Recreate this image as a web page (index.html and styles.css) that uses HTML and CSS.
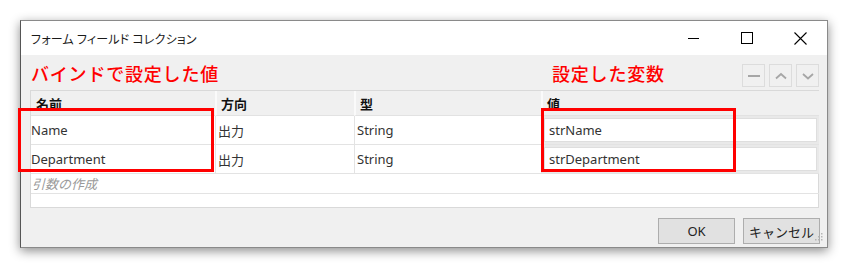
FILE: index.html
```html
<!DOCTYPE html>
<html lang="ja">
<head>
<meta charset="utf-8">
<link rel="stylesheet" href="styles.css">
</head>
<body>
<div class="stage">
  <div class="window">
    <div class="titlebar">
      <span class="title">フォーム フィールド コレクション</span>
      <div class="controls">
        <svg class="ctl ctl-min" width="12" height="12" viewBox="0 0 12 12"><path d="M0 6.5H11" stroke="#000" stroke-width="1"/></svg>
        <svg class="ctl ctl-max" width="13" height="13" viewBox="0 0 13 13"><rect x="0.5" y="0.5" width="11" height="11" fill="none" stroke="#000" stroke-width="1"/></svg>
        <svg class="ctl ctl-close" width="13" height="13" viewBox="0 0 13 13"><path d="M0.5 0.5L12.5 12.5M12.5 0.5L0.5 12.5" stroke="#000" stroke-width="1.1"/></svg>
      </div>
    </div>
    <div class="client">
      <div class="toprow">
        <span class="note">バインドで設定した値</span>
        <span></span>
        <span></span>
        <div class="col4">
          <span class="note">設定した変数</span>
          <div class="tools">
            <span class="tool"><svg width="14" height="10" viewBox="0 0 14 10"><path d="M1 5H13" stroke="#a6a6a6" stroke-width="2"/></svg></span>
            <span class="tool"><svg width="14" height="10" viewBox="0 0 14 10"><path d="M2 7.5L7 3L12 7.5" fill="none" stroke="#a6a6a6" stroke-width="1.8"/></svg></span>
            <span class="tool"><svg width="14" height="10" viewBox="0 0 14 10"><path d="M2 3L7 7.5L12 3" fill="none" stroke="#a6a6a6" stroke-width="1.8"/></svg></span>
          </div>
        </div>
      </div>
      <div class="grid">
        <div class="hcell">名前</div>
        <div class="hcell">方向</div>
        <div class="hcell">型</div>
        <div class="hcell">値</div>

        <div class="cell">Name</div>
        <div class="cell">出力</div>
        <div class="cell">String</div>
        <div class="cell vcell"><span class="input">strName</span></div>

        <div class="cell">Department</div>
        <div class="cell">出力</div>
        <div class="cell">String</div>
        <div class="cell vcell"><span class="input">strDepartment</span></div>

        <div class="wide create">引数の作成</div>
        <div class="wide blank"></div>
      </div>
      <div class="footer">
        <button class="btn">OK</button>
        <button class="btn">キャンセル</button>
      </div>
      <svg class="grip" width="9" height="9" viewBox="0 0 9 9">
        <rect x="7" y="1" width="1.5" height="1.5" fill="#b5b5b5"/>
        <rect x="4" y="4" width="1.5" height="1.5" fill="#b5b5b5"/>
        <rect x="7" y="4" width="1.5" height="1.5" fill="#b5b5b5"/>
        <rect x="1" y="7" width="1.5" height="1.5" fill="#b5b5b5"/>
        <rect x="4" y="7" width="1.5" height="1.5" fill="#b5b5b5"/>
        <rect x="7" y="7" width="1.5" height="1.5" fill="#b5b5b5"/>
      </svg>
      <div class="mark mark-left"></div>
      <div class="mark mark-right"></div>
    </div>
  </div>
</div>
</body>
</html>
```
FILE: styles.css
```css
* { box-sizing: border-box; }
html, body { margin: 0; padding: 0; background: #fff; }
body {
  width: 848px;
  height: 267px;
  overflow: hidden;
  font-family: "Noto Sans", "Noto Sans CJK JP", sans-serif;
}
.stage { padding: 20px 0 0 20px; }
.window {
  width: 808px;
  height: 228px;
  border: 1px solid #8a8a8a;
  border-left-color: #555;
  background: #f0f0f0;
  box-shadow: 0 3px 10px rgba(0,0,0,0.45);
  display: flex;
  flex-direction: column;
}
.titlebar {
  height: 34px;
  background: #fff;
  display: flex;
  align-items: center;
  justify-content: space-between;
  flex: none;
}
.title {
  margin-left: 10px;
  font-family: "Noto Sans CJK JP", sans-serif;
  font-size: 12px;
  font-feature-settings: "palt";
  color: #1a1a1a;
  letter-spacing: 0.2px;
}
.controls {
  display: flex;
  align-items: center;
  height: 100%;
}
.ctl { display: block; }
.ctl-min { margin-right: 41px; }
.ctl-max { margin-right: 40px; }
.ctl-close { margin-right: 20px; }

.client {
  position: relative;
  flex: 1;
  padding: 0 8px 0 9px;
  display: flex;
  flex-direction: column;
}
.toprow {
  height: 35px;
  display: grid;
  grid-template-columns: 184px 139px 187px 278px;
  align-items: center;
}
.note {
  font-family: "Noto Sans CJK JP", sans-serif;
  font-weight: 500;
  font-size: 18px;
  letter-spacing: 0.8px;
  color: #ff0000;
  padding-left: 1px;
  line-height: 1;
  margin-top: 1px;
  white-space: nowrap;
}
.col4 {
  display: flex;
  justify-content: space-between;
  align-items: center;
  padding-left: 11px;
}
.tools {
  display: flex;
  gap: 4px;
  margin-top: 6px;
  margin-right: -1px;
}
.tool {
  width: 23px;
  height: 23px;
  border: 1px solid #dcdcdc;
  background: #f0f0f0;
  display: flex;
  align-items: center;
  justify-content: center;
}
.tool svg { display: block; }

.grid {
  display: grid;
  grid-template-columns: 184px 139px 187px 278px;
  grid-template-rows: 25px 29px 29px 20px 13px;
  border: 1px solid #d9d9d9;
  background: #fff;
  font-size: 13px;
  color: #333;
}
.hcell {
  background: #f0f0f0;
  border-left: 2px solid #fafafa;
  border-bottom: 1px solid #e2e2e2;
  font-family: "Noto Sans CJK JP", sans-serif;
  font-weight: 700;
  font-size: 13px;
  color: #111;
  padding-left: 4px;
  display: flex;
  align-items: center;
}
.hcell:first-child { border-left: none; padding-left: 5px; }
.cell {
  border-bottom: 1px solid #e3e3e3;
  border-left: 1px solid #e3e3e3;
  display: flex;
  align-items: center;
  padding-left: 2px;
  font-family: "Noto Sans", "Noto Sans CJK JP", sans-serif;
  white-space: nowrap;
}
.cell:nth-child(4n+1) { border-left: none; padding-left: 0; }
.vcell {
  background: #e9e9e9;
  padding: 2px;
}
.input {
  flex: 1;
  height: 100%;
  background: #fff;
  border: 1px solid #dedede;
  display: flex;
  align-items: center;
  padding-left: 4px;
}
.wide { grid-column: 1 / -1; }
.create {
  font-family: "Noto Sans CJK JP", sans-serif;
  font-style: italic;
  font-size: 13px;
  color: #9a9a9a;
  display: flex;
  align-items: center;
  border-bottom: 1px solid #e3e3e3;
  padding-left: 1px;
}

.footer {
  display: flex;
  justify-content: flex-end;
  gap: 8px;
  padding-top: 10px;
}
.btn {
  width: 77px;
  height: 26px;
  border: 1px solid #adadad;
  background: #e1e1e1;
  font-family: "Noto Sans", "Noto Sans CJK JP", sans-serif;
  font-size: 13px;
  color: #222;
  padding: 0;
  margin: 0;
}
.btn:last-of-type { margin-right: -1px; }
.grip {
  position: absolute;
  right: 4px;
  bottom: 6px;
}
.mark {
  position: absolute;
  border: 3px solid #ff0000;
  top: 53px;
  height: 64px;
}
.mark-left { left: -3px; width: 196px; }
.mark-right { left: 520px; width: 195px; }
```
